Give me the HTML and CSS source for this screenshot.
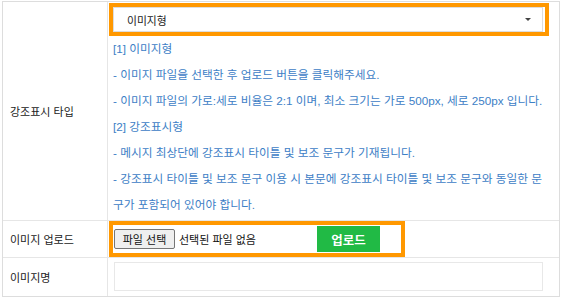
FILE: index.html
```html
<!DOCTYPE html>
<html lang="ko">
<head>
<meta charset="utf-8">
<link rel="stylesheet" href="styles.css">
</head>
<body>
<div class="form">
  <div class="row row-type">
    <div class="label">강조표시 타입</div>
    <div class="value value-type">
      <div class="hl hl-select">
        <div class="select">
          <span>이미지형</span>
          <span class="caret"></span>
        </div>
      </div>
      <div class="desc">
        <p>[1] 이미지형</p>
        <p>- 이미지 파일을 선택한 후 업로드 버튼을 클릭해주세요.</p>
        <p>- 이미지 파일의 가로:세로 비율은 2:1 이며, 최소 크기는 가로 500px, 세로 250px 입니다.</p>
        <p>[2] 강조표시형</p>
        <p>- 메시지 최상단에 강조표시 타이틀 및 보조 문구가 기재됩니다.</p>
        <p>- 강조표시 타이틀 및 보조 문구 이용 시 본문에 강조표시 타이틀 및 보조 문구와 동일한 문구가 포함되어 있어야 합니다.</p>
      </div>
    </div>
  </div>
  <div class="row row-upload">
    <div class="label">이미지 업로드</div>
    <div class="value value-upload">
      <div class="hl hl-upload">
        <div class="file">
          <button class="file-btn" type="button">파일 선택</button>
          <span class="file-name">선택된 파일 없음</span>
        </div>
        <button class="upload-btn" type="button">업로드</button>
      </div>
    </div>
  </div>
  <div class="row row-name">
    <div class="label">이미지명</div>
    <div class="value value-name">
      <div class="text-input"></div>
    </div>
  </div>
</div>
</body>
</html>
```
FILE: styles.css
```css
html, body {
  margin: 0;
  padding: 0;
  background: #ffffff;
}

body {
  font-family: "Liberation Sans", "Noto Sans CJK KR", sans-serif;
  color: #333333;
}

.form {
  margin: 1px 0 0 2px;
  width: 556px;
  border: 1px solid #dddddd;
}

.row {
  display: flex;
  border-top: 1px solid #e6e6e6;
}

.row:first-child {
  border-top: none;
}

.label {
  width: 97px;
  padding-left: 7px;
  border-right: 1px solid #e6e6e6;
  display: flex;
  align-items: center;
  font-size: 11px;
  color: #222222;
}

.value {
  flex: 1;
}

.value-type {
  padding: 1px 0 2px 1px;
}

.hl {
  border: 4px solid #ff9800;
  box-sizing: border-box;
}

.hl-select {
  width: 440px;
  height: 33px;
}

.select {
  width: 430px;
  height: 25px;
  box-sizing: border-box;
  border: 1px solid #dddddd;
  display: flex;
  align-items: center;
  justify-content: space-between;
  padding: 0 11px 0 13px;
  font-size: 10.8px;
  color: #222222;
}

.caret {
  width: 0;
  height: 0;
  border-left: 3px solid transparent;
  border-right: 3px solid transparent;
  border-top: 3px solid #444444;
}

.desc {
  padding-left: 4px;
  width: 436px;
  font-size: 11.7px;
  line-height: 26px;
  color: #3d80c6;
}

.desc p {
  margin: 0;
}

.value-upload {
  padding-left: 1px;
}

.hl-upload {
  width: 296px;
  height: 36px;
  display: flex;
  align-items: center;
}

.file {
  width: 203px;
  margin-left: 1px;
  display: flex;
  align-items: center;
}

.file-btn {
  width: 61px;
  height: 20px;
  box-sizing: border-box;
  margin: 0;
  padding: 0;
  border: 1px solid #767676;
  border-radius: 2px;
  background: #efefef;
  font-family: inherit;
  font-size: 11px;
  color: #111111;
}

.file-name {
  margin-left: 4px;
  font-size: 11px;
  color: #111111;
}

.upload-btn {
  width: 63px;
  height: 26px;
  margin: 0;
  padding: 0;
  border: none;
  background: #21ba45;
  color: #ffffff;
  font-family: inherit;
  font-size: 12.5px;
  font-weight: bold;
}

.value-name {
  padding: 4px 0 5px 6px;
}

.text-input {
  width: 429px;
  height: 29px;
  box-sizing: border-box;
  border: 1px solid #e8e8e8;
}
```
